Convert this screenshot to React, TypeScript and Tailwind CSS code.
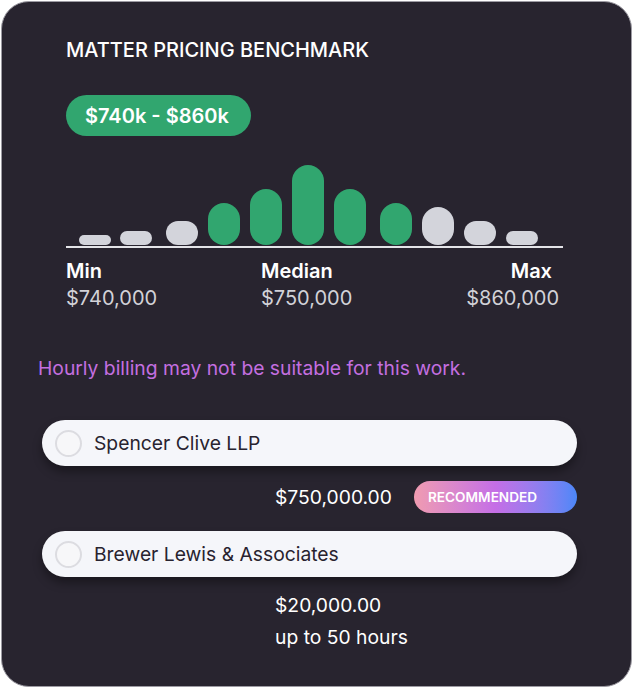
import React from "react";

const bars: { h: string; c: string; ml: string }[] = [
  { h: "h-[10px]", c: "bg-[#d3d4db]", ml: "ml-0" },
  { h: "h-[14px]", c: "bg-[#d3d4db]", ml: "ml-[9px]" },
  { h: "h-[24px]", c: "bg-[#d3d4db]", ml: "ml-[14px]" },
  { h: "h-[42px]", c: "bg-[#31a66f]", ml: "ml-[10px]" },
  { h: "h-[56px]", c: "bg-[#31a66f]", ml: "ml-[10px]" },
  { h: "h-[80px]", c: "bg-[#31a66f]", ml: "ml-[10px]" },
  { h: "h-[56px]", c: "bg-[#31a66f]", ml: "ml-[10px]" },
  { h: "h-[42px]", c: "bg-[#31a66f]", ml: "ml-[14px]" },
  { h: "h-[38px]", c: "bg-[#d3d4db]", ml: "ml-[10px]" },
  { h: "h-[24px]", c: "bg-[#d3d4db]", ml: "ml-[10px]" },
  { h: "h-[14px]", c: "bg-[#d3d4db]", ml: "ml-[10px]" },
];

function Option({ name }: { name: string }) {
  return (
    <div className="flex h-[46px] w-[535px] items-center rounded-full bg-[#f5f6fa] pl-[13px] shadow-[0_6px_10px_rgba(0,0,0,0.35)]">
      <div className="h-[27px] w-[27px] rounded-full border-2 border-[#dcdce1] bg-[#f7f7f9]" />
      <span className="ml-[12px] text-[19.3px] leading-[24px] text-[#28232f]">{name}</span>
    </div>
  );
}

export default function App() {
  return (
    <div
      className="h-[689px] w-[633px] bg-white p-[1px]"
      style={{ fontFamily: "Inter, 'Noto Sans', sans-serif" }}
    >
      <div className="flex h-[686px] w-[631px] flex-col overflow-hidden rounded-[28px] border border-[#9d9ba3] bg-[#28242f] pt-[35px]">
        <div className="pl-[64px]">
          <div className="text-[20px] font-medium leading-[26px] text-white">MATTER PRICING BENCHMARK</div>
          <div className="mt-[32px] flex h-[41px] w-[185px] items-center rounded-full bg-[#31a66f] pl-[19px] text-[20px] font-semibold text-white">
            $740k - $860k
          </div>
          <div className="mt-[29px] w-[497px]">
            <div className="flex h-[80px] items-end pl-[13px]">
              {bars.map((b, i) => (
                <div key={i} className={`w-[32px] shrink-0 rounded-full ${b.h} ${b.c} ${b.ml}`} />
              ))}
            </div>
            <div className="mt-[1px] h-[2px] w-[497px] bg-[#e4e4e8]" />
            <div className="mt-[10px] flex w-[493px] text-[20px] leading-[27px]">
              <div className="flex w-[195px] flex-col">
                <span className="font-semibold text-white">Min</span>
                <span className="text-[#d2d2d8]">$740,000</span>
              </div>
              <div className="flex flex-col">
                <span className="font-semibold text-white">Median</span>
                <span className="text-[#d2d2d8]">$750,000</span>
              </div>
              <div className="ml-auto flex flex-col items-end">
                <span className="pr-[7px] font-semibold text-white">Max</span>
                <span className="text-[#d2d2d8]">$860,000</span>
              </div>
            </div>
          </div>
        </div>
        <div className="mt-[44px] pl-[36px] text-[19.3px] leading-[24px] text-[#c46fe0]">
          Hourly billing may not be suitable for this work.
        </div>
        <div className="mt-[40px] flex flex-col pl-[40px]">
          <Option name="Spencer Clive LLP" />
          <div className="mt-[15px] flex h-[32px] w-[535px] items-center justify-between pl-[233px]">
            <span className="text-[19.3px] text-white">$750,000.00</span>
            <div className="flex h-[32px] w-[163px] items-center rounded-full bg-gradient-to-r from-[#f09bb0] via-[#c56ee6] to-[#4a87f8] pl-[14px] text-[13.6px] font-semibold text-white">
              RECOMMENDED
            </div>
          </div>
          <div className="mt-[18px]">
            <Option name="Brewer Lewis & Associates" />
          </div>
          <div className="mt-[12px] flex flex-col pl-[233px] text-[19.3px] leading-[32px] text-white">
            <span>$20,000.00</span>
            <span>up to 50 hours</span>
          </div>
        </div>
      </div>
    </div>
  );
}
